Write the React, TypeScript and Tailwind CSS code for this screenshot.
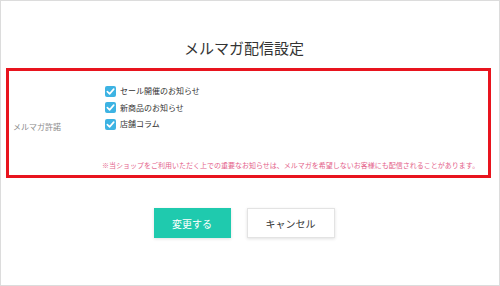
import React from "react";

const font = { fontFamily: '"Noto Sans CJK JP", "Noto Sans", sans-serif' };

function Check({ label }: { label: string }) {
  return (
    <div className="flex items-center h-[16px]">
      <span className="ml-[3px] w-[11px] h-[11px] rounded-[2px] bg-[#3db3e3] flex items-center justify-center">
        <svg width="9" height="9" viewBox="0 0 10 10">
          <path d="M1.5 5.2 L4 7.6 L8.6 2.4" stroke="#fff" strokeWidth="1.8" fill="none" strokeLinecap="round" strokeLinejoin="round" />
        </svg>
      </span>
      <span className="ml-[4px] text-[8px] leading-[10px] text-[#333]">{label}</span>
    </div>
  );
}

export default function App() {
  return (
    <div style={font} className="w-[500px] h-[286px] border border-[#dcdcdc] bg-white flex flex-col">
      <div className="pt-[36px] pr-[12px] flex justify-center">
        <h1 className="text-[15px] leading-[22px] text-[#333]">メルマガ配信設定</h1>
      </div>
      <div className="mt-[9px] ml-[5px] w-[485px] h-[110px] border-[3px] border-[#e8141e] flex">
        <div className="w-[93px] pl-[4px] pt-[8px] flex items-center">
          <span className="text-[8px] leading-[10px] text-[#8a8a8a]">メルマガ許諾</span>
        </div>
        <div className="flex-1 flex flex-col pt-[12px] pb-[5px]">
          <div className="flex flex-col gap-[0.5px]">
            <Check label="セール開催のお知らせ" />
            <Check label="新商品のお知らせ" />
            <Check label="店舗コラム" />
          </div>
          <p className="mt-auto text-[7px] leading-[10px] text-[#e4628a] whitespace-nowrap">
            ※当ショップをご利用いただく上での重要なお知らせは、メルマガを希望しないお客様にも配信されることがあります。
          </p>
        </div>
      </div>
      <div className="mt-[30px] pr-[12px] flex justify-center gap-[16px]">
        <button className="w-[77px] h-[30px] bg-[#1fcaae] text-white text-[10px] shadow-[0_1px_3px_rgba(0,0,0,0.12)]">
          変更する
        </button>
        <button className="w-[88px] h-[30px] bg-white border border-[#e3e3e3] text-[#333] text-[10px] shadow-[0_1px_3px_rgba(0,0,0,0.12)]">
          キャンセル
        </button>
      </div>
    </div>
  );
}
